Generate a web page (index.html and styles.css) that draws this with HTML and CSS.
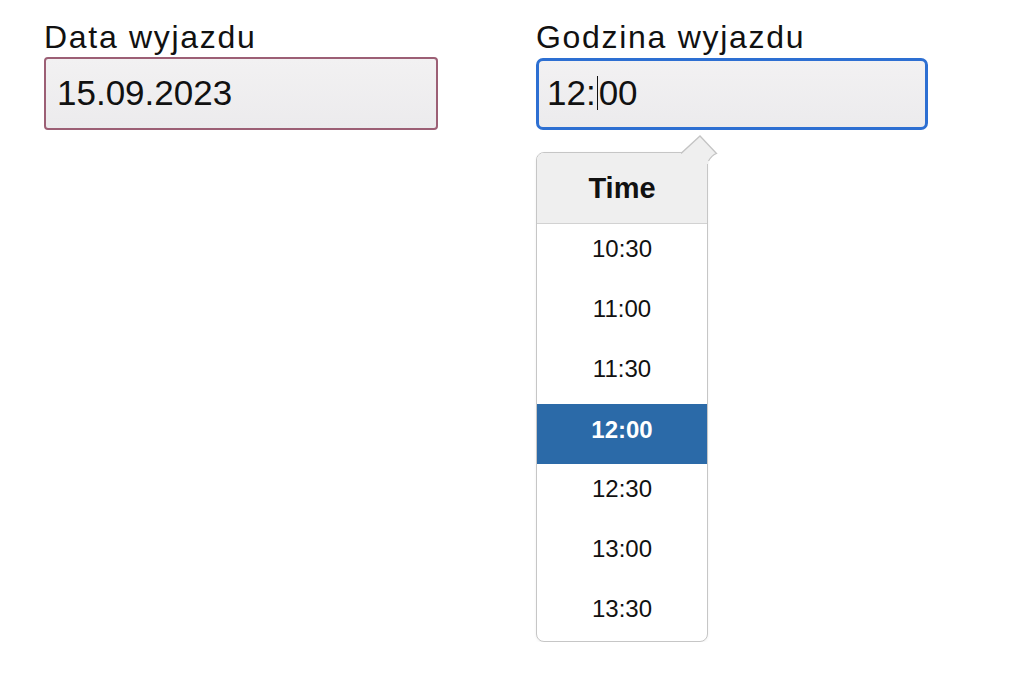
FILE: index.html
```html
<!DOCTYPE html>
<html lang="pl">
<head>
<meta charset="utf-8">
<title>Wyjazd</title>
<link rel="stylesheet" href="styles.css">
</head>
<body>
<div class="form">
  <div class="field">
    <div class="label">Data wyjazdu</div>
    <div class="input input-date">15.09.2023</div>
  </div>
  <div class="field field-time">
    <div class="label">Godzina wyjazdu</div>
    <div class="input input-time">12:<span class="caret"></span>00</div>
    <div class="picker">
      <svg class="beak" width="40" height="30" viewBox="0 0 40 30">
        <path d="M0 19.5 L19 2 L35.5 19.5 Q31 21 27.5 27 L27.5 30 L0 30 Z" fill="#efefef"/>
        <path d="M0 19.5 L19 2 L35.5 19.5 Q31 21 27.5 27" fill="none" stroke="#c4c4c4" stroke-width="1.3"/>
      </svg>
      <div class="picker-head">Time</div>
      <div class="picker-list">
        <div class="opt">10:30</div>
        <div class="opt">11:00</div>
        <div class="opt">11:30</div>
        <div class="opt selected">12:00</div>
        <div class="opt">12:30</div>
        <div class="opt">13:00</div>
        <div class="opt">13:30</div>
      </div>
    </div>
  </div>
</div>
</body>
</html>
```

FILE: styles.css
```css
html, body {
  margin: 0;
  padding: 0;
  background: #ffffff;
}

body {
  font-family: "Liberation Sans", Arial, Helvetica, sans-serif;
  color: #111111;
}

.form {
  display: flex;
  align-items: flex-start;
  gap: 98px;
  padding: 17px 0 0 44px;
}

.field {
  display: flex;
  flex-direction: column;
  width: 394px;
}

.field-time {
  width: 392px;
}

.label {
  font-size: 32px;
  letter-spacing: 1.7px;
  line-height: 40px;
  color: #111111;
}

.input {
  box-sizing: border-box;
  height: 73px;
  display: flex;
  align-items: center;
  padding-left: 11px;
  padding-bottom: 2px;
  font-size: 35px;
  color: #111111;
  background: linear-gradient(180deg, #f2f1f2 0%, #ecebed 100%);
}

.input-date {
  border: 2px solid #9c5f75;
  border-radius: 4px;
}

.input-time {
  border: 3px solid #2d6fd2;
  border-radius: 7px;
  padding-left: 8px;
  height: 72px;
  margin-top: 1px;
}

.caret {
  display: inline-block;
  width: 1.5px;
  height: 34px;
  background: #111111;
  margin: 0 0.5px 0 1px;
}

.picker {
  position: relative;
  margin-top: 22px;
  width: 172px;
  height: 490px;
  box-sizing: border-box;
  border: 1.5px solid #c6c6c6;
  border-radius: 8px;
  background: #ffffff;
  box-shadow: 0 1px 3px rgba(0, 0, 0, 0.06);
}

.beak {
  position: absolute;
  left: 144px;
  top: -19px;
  display: block;
}

.picker-head {
  height: 70px;
  border-bottom: 1.5px solid #d2d2d2;
  background: #efefef;
  border-radius: 7px 7px 0 0;
  display: flex;
  align-items: center;
  justify-content: center;
  font-size: 29px;
  font-weight: bold;
  color: #111111;
}

.picker-list {
  height: 416px;
  overflow: hidden;
  border-radius: 0 0 7px 7px;
}

.opt {
  height: 60px;
  box-sizing: border-box;
  padding-bottom: 11px;
  display: flex;
  align-items: center;
  justify-content: center;
  font-size: 24px;
  color: #111111;
}

.opt.selected {
  background: #2b6aa8;
  color: #ffffff;
  font-weight: bold;
  padding-bottom: 8px;
}
```
